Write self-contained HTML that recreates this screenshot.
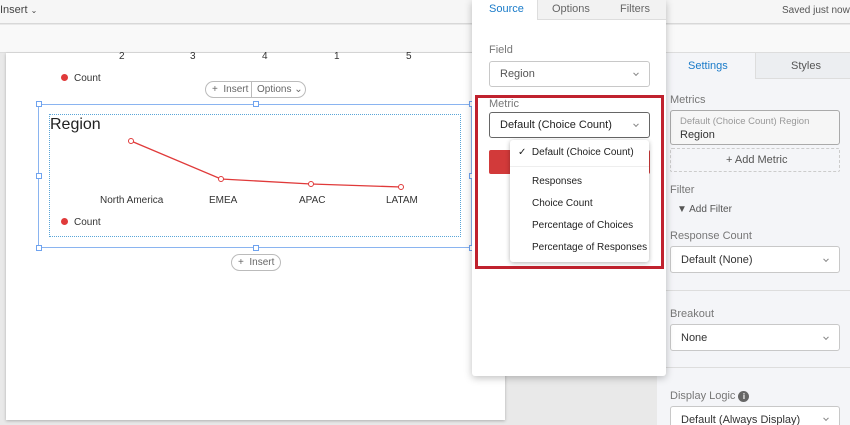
<!DOCTYPE html>
<html style="overflow:hidden;width:850px;height:425px"><head><meta charset="utf-8"><style>
*{box-sizing:border-box;margin:0;padding:0}
body{width:850px;height:425px;overflow:hidden;position:relative;background:#e9e9e9;font-family:"Liberation Sans",sans-serif;color:#333}
.a{position:absolute}
.t{font-size:10px;white-space:nowrap}
.h{width:6px;height:6px;border:1px solid #6fa3ef;background:#fff;position:absolute}
.sel{border:1px solid #c8c8c8;border-radius:3px;background:#fff;position:absolute;font-size:11px;padding-left:10px;display:flex;align-items:center;overflow:hidden}
.chev{position:absolute;right:11px;top:50%;width:4px;height:4px;border-right:1px solid #888;border-bottom:1px solid #888;transform:translateY(-70%) rotate(45deg)}
.lbl{position:absolute;font-size:11px;color:#777}
</style></head><body>
<div class="a" style="left:0;top:0;width:850px;height:24px;background:#f6f6f6;border-bottom:1px solid #d8d8d8"></div>
<div class="a t" style="left:0;top:4px;font-size:11px;color:#444">Insert <span style="font-size:8px">&#8964;</span></div>
<div class="a t" style="left:782px;top:5px;font-size:10px;color:#555">Saved just now</div>
<div class="a" style="left:0;top:25px;width:850px;height:28px;background:#f9f9f9;border-bottom:1px solid #ddd"></div>
<div class="a" style="left:6px;top:53px;width:499px;height:367px;background:#fff;box-shadow:0 1px 3px rgba(0,0,0,.25)"></div>
<div class="a t" style="left:119px;top:51px">2</div>
<div class="a t" style="left:190px;top:51px">3</div>
<div class="a t" style="left:262px;top:51px">4</div>
<div class="a t" style="left:334px;top:51px">1</div>
<div class="a t" style="left:406px;top:51px">5</div>
<div class="a" style="left:61px;top:74px;width:7px;height:7px;border-radius:50%;background:#e03a3a"></div>
<div class="a t" style="left:74px;top:73px;font-size:10px">Count</div>
<div class="a" style="left:205px;top:81px;width:101px;height:17px;border:1px solid #bbb;border-radius:9px;background:#fff"></div>
<div class="a" style="left:251px;top:81px;width:1px;height:17px;background:#bbb"></div>
<div class="a t" style="left:212px;top:84px;font-size:10px;color:#666">+&nbsp; Insert</div>
<div class="a t" style="left:257px;top:84px;font-size:10px;color:#666">Options &#8964;</div>
<div class="a" style="left:38px;top:104px;width:434px;height:144px;border:1px solid #8ab4f0"></div>
<div class="a" style="left:49px;top:114px;width:412px;height:123px;border:1px dotted #5aa5d8"></div>
<div class="h" style="left:36px;top:101px"></div><div class="h" style="left:253px;top:101px"></div><div class="h" style="left:469px;top:101px"></div>
<div class="h" style="left:36px;top:173px"></div><div class="h" style="left:469px;top:173px"></div>
<div class="h" style="left:36px;top:245px"></div><div class="h" style="left:253px;top:245px"></div><div class="h" style="left:469px;top:245px"></div>
<div class="a" style="left:50px;top:116px;font-size:16px;color:#222">Region</div>
<svg class="a" style="left:0;top:0" width="505" height="260"><polyline points="131,141 221,179 311,184 401,187" fill="none" stroke="#e03a3a" stroke-width="1.3"/>
<g fill="#fff" stroke="#e03a3a"><circle cx="131" cy="141" r="2.5"/><circle cx="221" cy="179" r="2.5"/><circle cx="311" cy="184" r="2.5"/><circle cx="401" cy="187" r="2.5"/></g></svg>
<div class="a t" style="left:100px;top:195px">North America</div>
<div class="a t" style="left:209px;top:195px">EMEA</div>
<div class="a t" style="left:299px;top:195px">APAC</div>
<div class="a t" style="left:386px;top:195px">LATAM</div>
<div class="a" style="left:61px;top:218px;width:7px;height:7px;border-radius:50%;background:#e03a3a"></div>
<div class="a t" style="left:74px;top:217px;font-size:10px">Count</div>
<div class="a" style="left:231px;top:254px;width:50px;height:17px;border:1px solid #bbb;border-radius:9px;background:#fff"></div>
<div class="a t" style="left:238px;top:257px;font-size:10px;color:#666">+&nbsp; Insert</div>
<div class="a" style="left:657px;top:53px;width:193px;height:372px;background:#f4f5f8"></div>
<div class="a" style="left:755px;top:53px;width:95px;height:26px;background:#eceef1;border-left:1px solid #ddd;border-bottom:1px solid #ddd"></div>
<div class="a t" style="left:688px;top:60px;font-size:11px;color:#1a7bc9">Settings</div>
<div class="a t" style="left:791px;top:60px;font-size:11px;color:#555">Styles</div>
<div class="lbl" style="left:670px;top:94px">Metrics</div>
<div class="a" style="left:670px;top:110px;width:170px;height:35px;border:1px solid #aaa;border-radius:3px;background:#f6f6f6"></div>
<div class="a t" style="left:680px;top:116px;font-size:9.5px;color:#999">Default (Choice Count) Region</div>
<div class="a t" style="left:680px;top:129px;font-size:11px">Region</div>
<div class="a" style="left:670px;top:148px;width:170px;height:24px;border:1px dashed #ccc;border-radius:2px"></div>
<div class="a t" style="left:726px;top:154px;font-size:11px;color:#555">+ Add Metric</div>
<div class="lbl" style="left:670px;top:184px">Filter</div>
<div class="a t" style="left:677px;top:204px;font-size:10px;color:#555">&#9660; Add Filter</div>
<div class="lbl" style="left:670px;top:230px">Response Count</div>
<div class="sel" style="left:670px;top:246px;width:170px;height:27px">Default (None)<span class="chev"></span></div>
<div class="a" style="left:657px;top:290px;width:193px;height:1px;background:#ddd"></div>
<div class="lbl" style="left:670px;top:308px">Breakout</div>
<div class="sel" style="left:670px;top:324px;width:170px;height:27px">None<span class="chev"></span></div>
<div class="a" style="left:657px;top:367px;width:193px;height:1px;background:#ddd"></div>
<div class="lbl" style="left:670px;top:390px">Display Logic <span style="display:inline-block;width:11px;height:11px;border-radius:50%;background:#666;color:#fff;font-size:8px;text-align:center;line-height:11px;font-weight:bold">i</span></div>
<div class="sel" style="left:670px;top:406px;width:170px;height:19px;border-bottom:none;border-radius:3px 3px 0 0;align-items:flex-start;padding-top:7px">Default (Always Display)<span class="chev" style="top:12px"></span></div>
<div class="a" style="left:472px;top:0;width:194px;height:376px;background:#fff;border-radius:0 0 3px 3px;box-shadow:0 2px 8px rgba(0,0,0,.25)"></div>
<div class="a" style="left:537px;top:0;width:129px;height:20px;background:#f2f2f2;border-left:1px solid #ddd;border-bottom:1px solid #ddd"></div>
<div class="a t" style="left:489px;top:3px;font-size:11px;color:#1a7bc9">Source</div>
<div class="a t" style="left:552px;top:3px;font-size:11px;color:#666">Options</div>
<div class="a t" style="left:620px;top:3px;font-size:11px;color:#666">Filters</div>
<div class="lbl" style="left:489px;top:44px">Field</div>
<div class="sel" style="left:489px;top:61px;width:161px;height:26px;color:#555">Region<span class="chev"></span></div>
<div class="a" style="left:475px;top:95px;width:189px;height:174px;border:3px solid #c0222e"></div>
<div class="lbl" style="left:489px;top:98px">Metric</div>
<div class="sel" style="left:489px;top:112px;width:161px;height:26px;border-color:#666;color:#222">Default (Choice Count)<span class="chev"></span></div>
<div class="a" style="left:489px;top:150px;width:161px;height:24px;background:#d23a3a;border-radius:2px"></div>
<div class="a" style="left:510px;top:140px;width:139px;height:122px;background:#fff;border-radius:3px;box-shadow:0 1px 5px rgba(0,0,0,.3)"></div>
<div class="a" style="left:510px;top:166px;width:139px;height:1px;background:#eee"></div>
<div class="a t" style="left:518px;top:147px;font-size:10px;color:#222">&#10003;&nbsp; Default (Choice Count)</div>
<div class="a t" style="left:532px;top:176px;font-size:10px;color:#222">Responses</div>
<div class="a t" style="left:532px;top:198px;font-size:10px;color:#222">Choice Count</div>
<div class="a t" style="left:532px;top:220px;font-size:10px;color:#222">Percentage of Choices</div>
<div class="a t" style="left:532px;top:242px;font-size:10px;color:#222">Percentage of Responses</div>
</body></html>
